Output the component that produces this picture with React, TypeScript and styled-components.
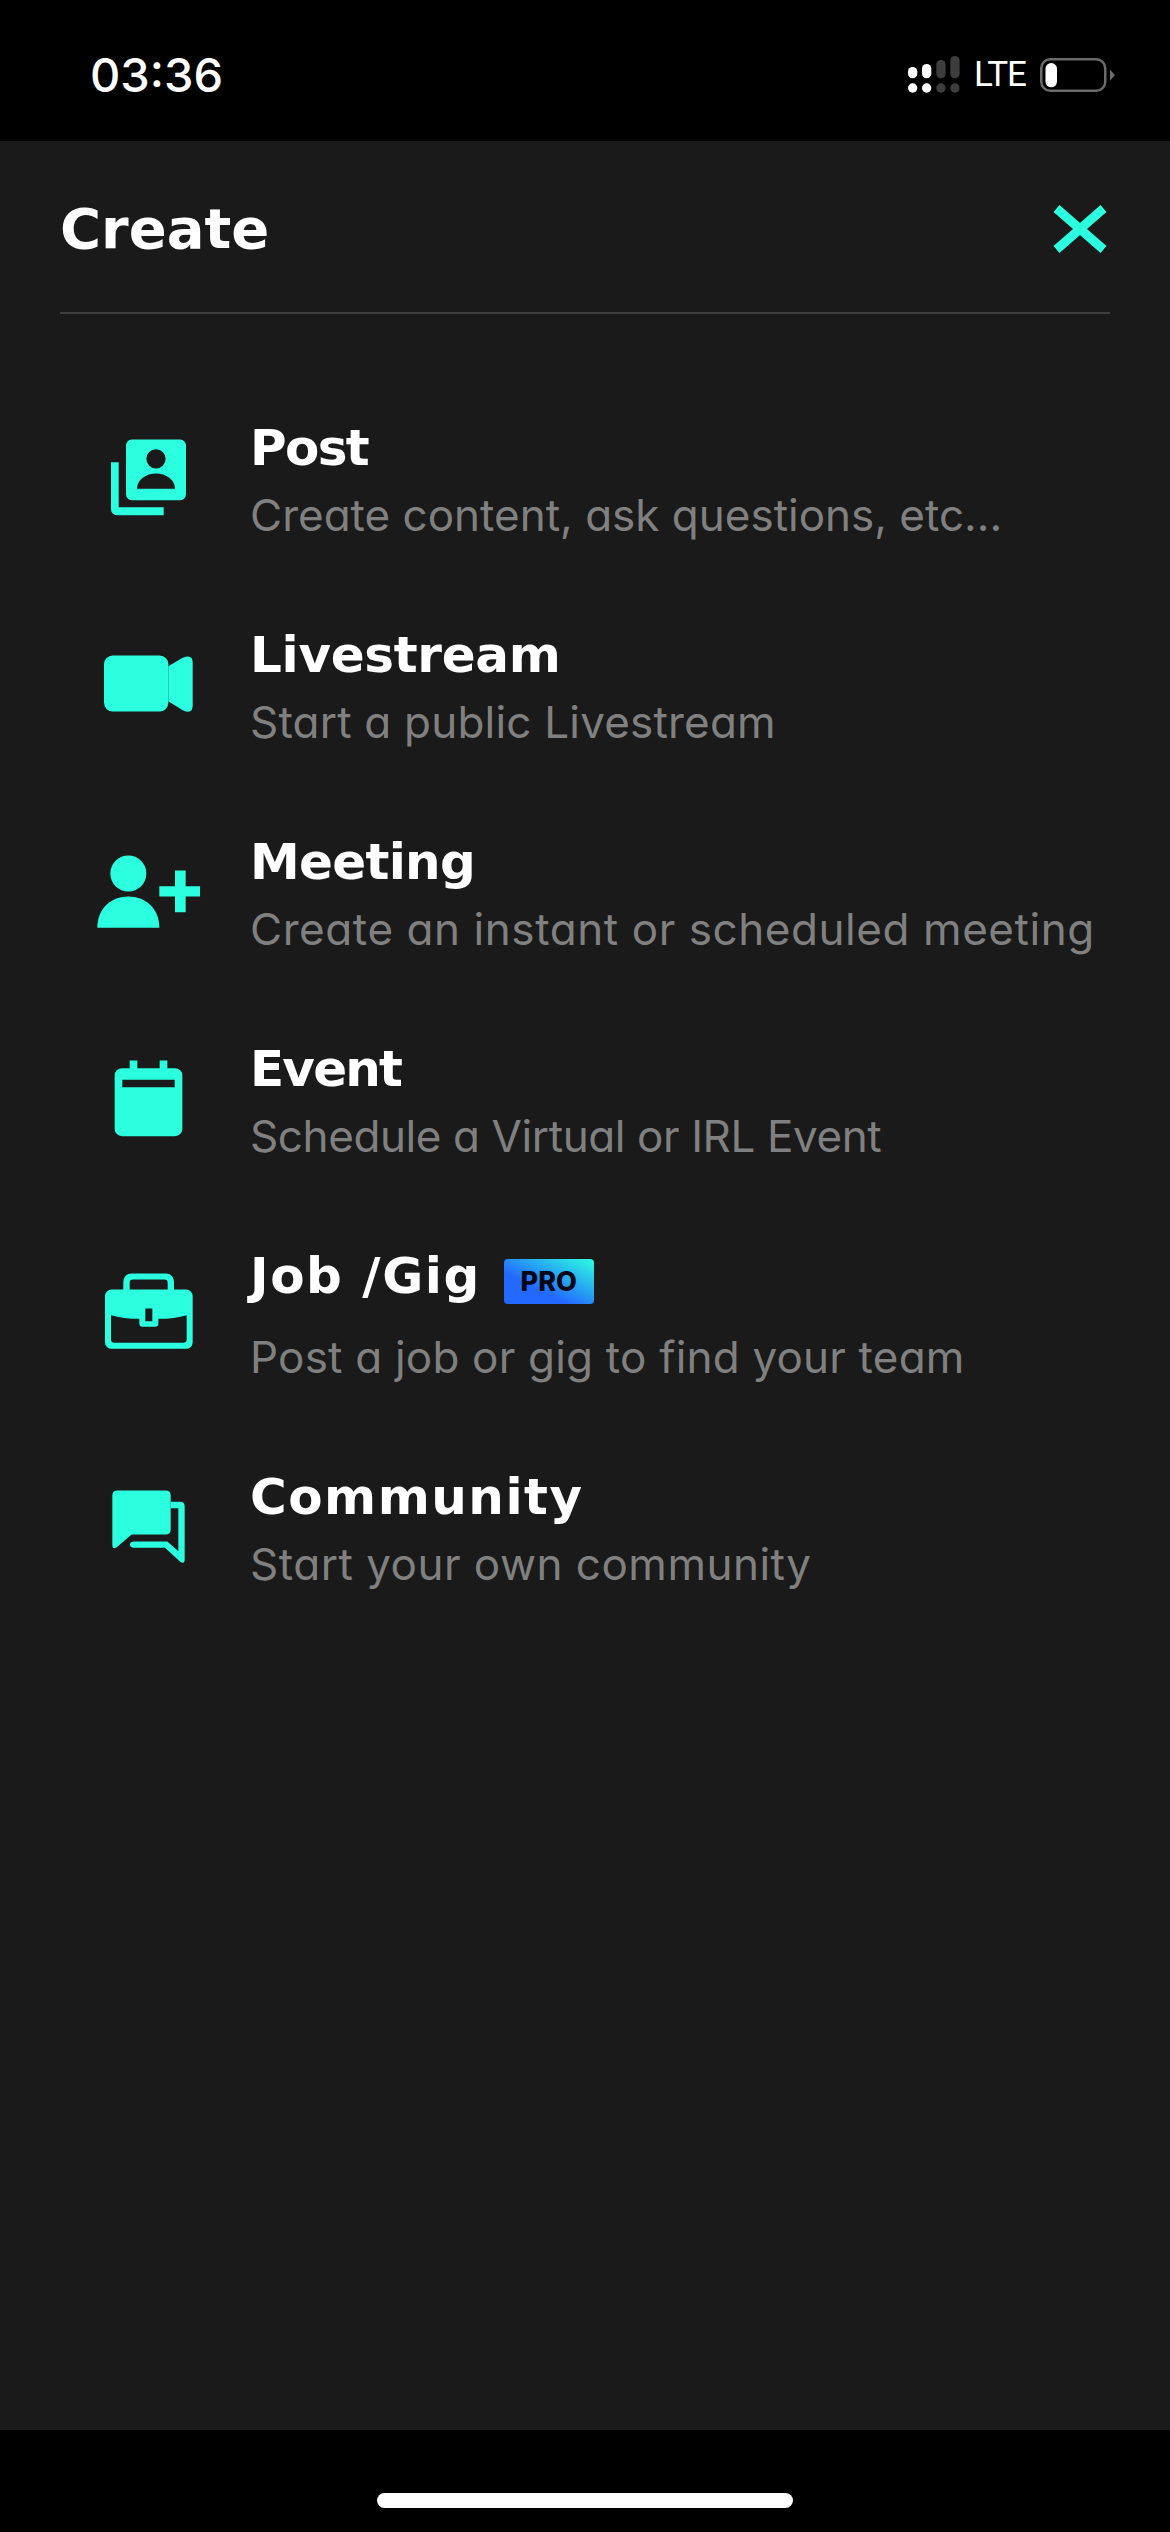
import React from "react";
import styled, { createGlobalStyle } from "styled-components";

const TEAL = "#2cffdf";
const PANEL = "#1a1a1a";
const HEAVY = `"DejaVu Sans", Inter, sans-serif`;

const GlobalStyle = createGlobalStyle`
  html, body {
    margin: 0;
    padding: 0;
    background: #000;
  }
`;

const Screen = styled.div`
  width: 1170px;
  height: 2532px;
  display: flex;
  flex-direction: column;
  background: #000;
  color: #fff;
  font-family: Inter, "Liberation Sans", sans-serif;
`;

const StatusBar = styled.div`
  height: 141px;
  box-sizing: border-box;
  padding: 0 55px 0 90px;
  display: flex;
  align-items: center;
  justify-content: space-between;
`;

const Clock = styled.div`
  font-size: 47px;
  font-weight: 500;
  margin-top: 8px;
`;

const StatusIcons = styled.div`
  display: flex;
  align-items: center;
  gap: 14px;
  margin-top: 8px;
`;

const Carrier = styled.span`
  font-family: Roboto, sans-serif;
  font-size: 35px;
  letter-spacing: -1px;
  line-height: 1;
`;

const Panel = styled.div`
  flex: 1;
  background: ${PANEL};
`;

const Header = styled.div`
  margin: 0 60px;
  height: 173px;
  box-sizing: border-box;
  border-bottom: 2px solid #3f3f3f;
  display: flex;
  align-items: center;
  justify-content: space-between;
  padding-top: 4px;
`;

const Heading = styled.h1`
  margin: 0;
  font-family: ${HEAVY};
  font-size: 56px;
  font-weight: 700;
`;

const List = styled.div`
  padding-top: 64px;
`;

const Row = styled.div`
  display: flex;
  align-items: center;
  gap: 50px;
  padding: 35px 0 36px 80px;
`;

const IconCell = styled.svg`
  flex: none;
  width: 120px;
  height: 120px;
  fill: ${TEAL};
`;

const Copy = styled.div`
  display: flex;
  flex-direction: column;
`;

const TitleLine = styled.div<{ $tall?: boolean }>`
  display: flex;
  align-items: center;
  gap: 23px;
  height: 68px;
  box-sizing: border-box;
  padding-top: 2px;
  margin-bottom: ${(p) => (p.$tall ? "14px" : "0")};
`;

const Title = styled.span<{ $tracking: number }>`
  font-family: ${HEAVY};
  font-size: 50px;
  font-weight: 700;
  line-height: 66px;
  letter-spacing: ${(p) => p.$tracking}px;
`;

const Subtitle = styled.span<{ $tracking: number }>`
  font-size: 44px;
  font-feature-settings: "cv11";
  letter-spacing: ${(p) => p.$tracking}px;
  line-height: 68px;
  color: #808080;
  white-space: nowrap;
`;

const ProBadge = styled.span`
  width: 90px;
  height: 45px;
  margin-top: 10px;
  border-radius: 4px;
  display: flex;
  align-items: center;
  justify-content: center;
  background: linear-gradient(to top right, #2469ff 35%, #2cffdf 100%);
  color: #020617;
  font-size: 27px;
  font-weight: 800;
`;

const BottomBar = styled.div`
  height: 102px;
  display: flex;
  justify-content: center;
  padding-top: 63px;
  box-sizing: border-box;
`;

const HomeIndicator = styled.div`
  width: 416px;
  height: 15px;
  border-radius: 8px;
  background: #fff;
`;

const SignalIcon = () => (
  <svg width="52" height="37" viewBox="0 0 52 37">
    <g fill="#fff">
      <rect x="0" y="11" width="9.3" height="11.3" rx="4.6" />
      <rect x="14" y="8" width="9.3" height="14.3" rx="4.6" />
      <rect x="0" y="27.3" width="9.3" height="9.4" rx="4.6" />
      <rect x="14" y="27.3" width="9.3" height="9.4" rx="4.6" />
    </g>
    <g fill="#3d3d3d">
      <rect x="28.3" y="4" width="9.3" height="18.3" rx="4.6" />
      <rect x="42.3" y="0" width="9.3" height="22.3" rx="4.6" />
      <rect x="28.3" y="27.3" width="9.3" height="9.4" rx="4.6" />
      <rect x="42.3" y="27.3" width="9.3" height="9.4" rx="4.6" />
    </g>
  </svg>
);

const BatteryIcon = () => (
  <svg width="75" height="34" viewBox="0 0 75 34">
    <rect x="1.25" y="1.25" width="64" height="31.5" rx="9" fill="none" stroke="#6b6b6b" strokeWidth="2.5" />
    <rect x="5.5" y="5" width="11.5" height="24.3" rx="5.7" fill="#fff" />
    <path d="M70 11.7L75 17L70 22.7Z" fill="#6b6b6b" />
  </svg>
);

const CloseIcon = () => (
  <svg width="57" height="48" viewBox="0 0 57 48">
    <path d="M3.5 3.5L50.5 44.5M50.5 3.5L3.5 44.5" stroke={TEAL} strokeWidth="9" fill="none" />
  </svg>
);

const PostIcon = () => (
  <IconCell viewBox="0 34.5 360 360">
    <path
      fillRule="evenodd"
      d="M156 90H300a18 18 0 0 1 18 18V254a18 18 0 0 1-18 18H156a18 18 0 0 1-18-18V108a18 18 0 0 1 18-18ZM228 119a29 29 0 1 0 0 58a29 29 0 0 0 0-58ZM171 238H285C285 210 258 192 228 192S171 210 171 238Z"
    />
    <path d="M93 158H116V293H251V317H111a18 18 0 0 1-18-18Z" />
  </IconCell>
);

const VideoIcon = () => (
  <IconCell viewBox="0 655.5 360 360">
    <path d="M98 738H239a26 26 0 0 1 26 26V880a26 26 0 0 1-26 26H98a26 26 0 0 1-26-26V764a26 26 0 0 1 26-26Z" />
    <path d="M265 770L308 745Q338 732 338 760V888Q338 916 308 902L265 875Z" />
  </IconCell>
);

const MeetingIcon = () => (
  <IconCell viewBox="0 16.5 360 360">
    <circle cx="145" cy="132" r="54" />
    <path d="M52 295C52 235 95 201 145 201S238 235 238 295Z" />
    <path d="M285 123H317V170H363V201H317V248H285V201H238V170H285Z" />
  </IconCell>
);

const EventIcon = () => (
  <IconCell viewBox="0 637.5 360 360">
    <path
      fillRule="evenodd"
      d="M149 693H172V716H239V693H262V716H285a22 22 0 0 1 22 22V898a22 22 0 0 1-22 22H126a22 22 0 0 1-22-22V738a22 22 0 0 1 22-22H149ZM127 751V773H284V751Z"
    />
  </IconCell>
);

const JobIcon = () => (
  <IconCell viewBox="0 19.5 360 360">
    <path
      fillRule="evenodd"
      d="M130 120V96a24 24 0 0 1 24-24H258a24 24 0 0 1 24 24V120H318a20 20 0 0 1 20 20V278a20 20 0 0 1-20 20H95a20 20 0 0 1-20-20V140a20 20 0 0 1 20-20ZM149 120H263V100a10 10 0 0 0-10-10H159a10 10 0 0 0-10 10ZM93 197V270a10 10 0 0 0 10 10H310a10 10 0 0 0 10-10V197Q285 208 235 208V222a10 10 0 0 1-10 10H188a10 10 0 0 1-10-10V208Q130 208 93 197ZM196 177V215H217V177Z"
    />
  </IconCell>
);

const CommunityIcon = () => (
  <IconCell viewBox="0 661.5 360 360">
    <path d="M112 723H257Q272 723 272 738V840Q272 855 257 855H155L110 893Q97 902 97 885V738Q97 723 112 723Z" />
    <path d="M272 757H300Q314 757 314 771V930Q314 946 300 936L255 895H163Q150 895 150 885Q150 876 163 876H262L295 905V776H272Z" />
  </IconCell>
);

// tracking values keep each line at the width it has in the design
const items = [
  { icon: <PostIcon />, title: "Post", titleTracking: -1.65, text: "Create content, ask questions, etc...", textTracking: 0 },
  { icon: <VideoIcon />, title: "Livestream", titleTracking: -0.3, text: "Start a public Livestream", textTracking: 0.2 },
  { icon: <MeetingIcon />, title: "Meeting", titleTracking: -0.7, text: "Create an instant or scheduled meeting", textTracking: 0.57 },
  { icon: <EventIcon />, title: "Event", titleTracking: -1.8, text: "Schedule a Virtual or IRL Event", textTracking: -0.4 },
  { icon: <JobIcon />, title: "Job /Gig", titleTracking: 1.55, text: "Post a job or gig to find your team", textTracking: 0.2, pro: true },
  { icon: <CommunityIcon />, title: "Community", titleTracking: 1.5, text: "Start your own community", textTracking: 0.5 },
];

const App = () => (
  <Screen>
    <GlobalStyle />
    <StatusBar>
      <Clock>03:36</Clock>
      <StatusIcons>
        <SignalIcon />
        <Carrier>LTE</Carrier>
        <BatteryIcon />
      </StatusIcons>
    </StatusBar>
    <Panel>
      <Header>
        <Heading>Create</Heading>
        <CloseIcon />
      </Header>
      <List>
        {items.map((item) => (
          <Row key={item.title}>
            {item.icon}
            <Copy>
              <TitleLine $tall={item.pro}>
                <Title $tracking={item.titleTracking}>{item.title}</Title>
                {item.pro && <ProBadge>PRO</ProBadge>}
              </TitleLine>
              <Subtitle $tracking={item.textTracking}>{item.text}</Subtitle>
            </Copy>
          </Row>
        ))}
      </List>
    </Panel>
    <BottomBar>
      <HomeIndicator />
    </BottomBar>
  </Screen>
);

export default App;
